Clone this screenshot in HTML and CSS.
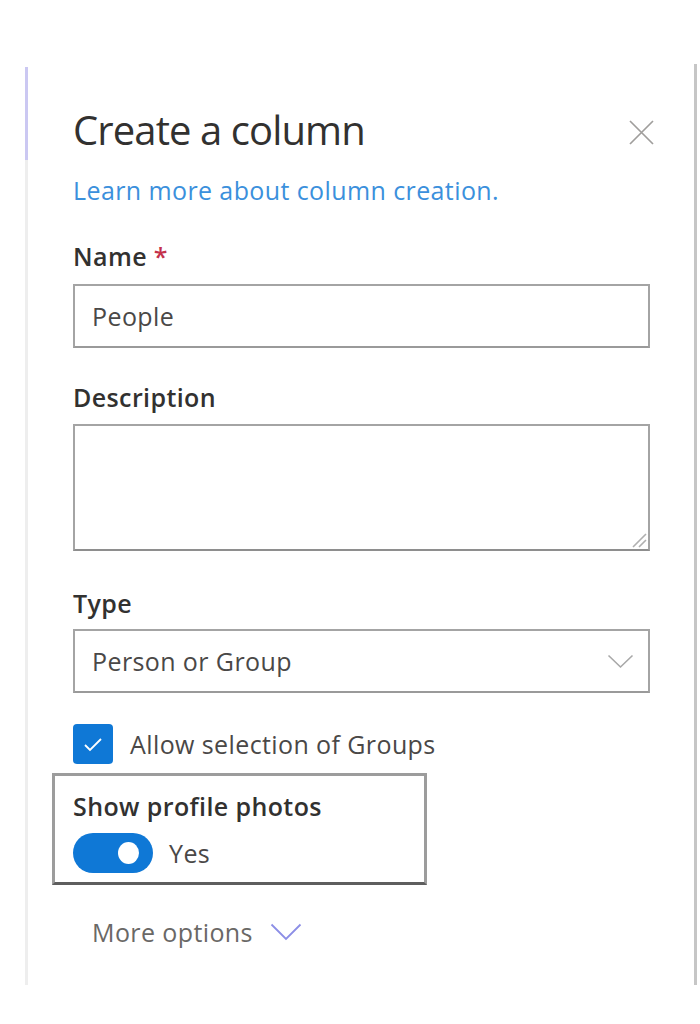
FILE: index.html
```html
<!DOCTYPE html>
<html lang="en">
<head>
<meta charset="utf-8">
<title>Create a column</title>
<link rel="stylesheet" href="styles.css">
</head>
<body>
<div class="page">
  <div class="panel">
    <div class="accent"></div>
    <div class="content">
      <div class="header">
        <h1 class="title">Create a column</h1>
        <span class="close" aria-label="Close">
          <svg width="27" height="27" viewBox="0 0 27 27"><path d="M2 2L25 25M25 2L2 25" stroke="#a09e9c" stroke-width="1.7" fill="none"/></svg>
        </span>
      </div>
      <a class="link" href="#">Learn more about column creation.</a>

      <div class="label label-name">Name <span class="req">*</span></div>
      <div class="field">People</div>

      <div class="label label-gap">Description</div>
      <div class="area-wrap">
        <textarea class="area"></textarea>
        <svg class="grip" width="18" height="18" viewBox="0 0 18 18"><path d="M17 4L4 17M17 10L10 17" stroke="#b0b0b0" stroke-width="1.6" fill="none"/></svg>
      </div>

      <div class="label label-type">Type</div>
      <div class="field select">
        <span>Person or Group</span>
        <svg width="27" height="15" viewBox="0 0 27 15"><path d="M1.5 1.5L13.5 13L25.5 1.5" stroke="#a8a8a8" stroke-width="1.6" fill="none"/></svg>
      </div>

      <div class="check-row">
        <span class="checkbox">
          <svg width="20" height="15" viewBox="0 0 20 15"><path d="M2 8L7 13L18 2" stroke="#ffffff" stroke-width="1.8" fill="none"/></svg>
        </span>
        <span class="check-label">Allow selection of Groups</span>
      </div>

      <div class="photo-box">
        <div class="label">Show profile photos</div>
        <div class="toggle-row">
          <span class="toggle"><span class="thumb"></span></span>
          <span class="toggle-label">Yes</span>
        </div>
      </div>

      <div class="more">
        <span>More options</span>
        <svg width="32" height="18" viewBox="0 0 32 18"><path d="M1.5 1.5L16 16L30.5 1.5" stroke="#8c8ee6" stroke-width="1.8" fill="none"/></svg>
      </div>
    </div>
  </div>
</div>
</body>
</html>
```

FILE: styles.css
```css
html, body {
  margin: 0;
  padding: 0;
  background: #ffffff;
}

body {
  font-family: "Open Sans", "Noto Sans", "DejaVu Sans", sans-serif;
  color: #323130;
}

.page {
  padding-top: 64px;
  padding-left: 25px;
}

.panel {
  display: flex;
  width: 672px;
  height: 921px;
}

.accent {
  width: 3px;
  flex: none;
  margin-top: 3px;
  background: linear-gradient(to bottom, #cbc8f2 0, #cbc8f2 93px, #eeeeee 93px, #eeeeee 100%);
}

.content {
  flex: 1;
  display: flex;
  flex-direction: column;
  padding: 40px 44px 0 45px;
  border-right: 3px solid #c6c6c6;
}

.header {
  display: flex;
  justify-content: space-between;
  align-items: center;
  height: 52px;
}

.title {
  margin: 0;
  font-size: 40px;
  line-height: 52px;
  font-weight: 400;
  letter-spacing: -0.9px;
  color: #323130;
}

.close {
  display: flex;
  margin-right: -5px;
  margin-top: 4px;
}

.link {
  margin-top: 18px;
  font-size: 25px;
  line-height: 32px;
  letter-spacing: 0.4px;
  color: #3b90dc;
  text-decoration: none;
}

.label {
  font-size: 25px;
  line-height: 32px;
  letter-spacing: 0.4px;
  font-weight: 600;
  color: #323130;
}

.label-name {
  margin-top: 34px;
  margin-bottom: 12px;
}

.req {
  color: #c4314b;
}

.label-gap {
  margin-top: 33px;
  margin-bottom: 11px;
}

.label-type {
  margin-top: 36px;
  margin-bottom: 10px;
}

.field {
  box-sizing: border-box;
  height: 64px;
  border: 2px solid #a4a4a4;
  border-bottom-color: #9a9a9a;
  padding: 0 17px;
  display: flex;
  align-items: center;
  font-size: 25px;
  letter-spacing: 0.4px;
  color: #4a4847;
}

.select {
  justify-content: space-between;
  padding-right: 14px;
}

.area-wrap {
  position: relative;
  display: flex;
}

.area {
  box-sizing: border-box;
  width: 100%;
  height: 127px;
  margin: 0;
  border: 2px solid #a4a4a4;
  border-bottom-color: #8e8e8e;
  resize: none;
  font-family: inherit;
}

.grip {
  position: absolute;
  right: 3px;
  bottom: 3px;
}

.check-row {
  display: flex;
  align-items: center;
  margin-top: 31px;
  gap: 17px;
}

.checkbox {
  box-sizing: border-box;
  width: 40px;
  height: 40px;
  border-radius: 4px;
  background: #0f78d6;
  display: flex;
  align-items: center;
  justify-content: center;
}

.check-label {
  font-size: 25px;
  letter-spacing: 0.4px;
  color: #4a4847;
}

.photo-box {
  box-sizing: border-box;
  width: 375px;
  margin-left: -21px;
  margin-top: 9px;
  border: 3px solid #9c9c9c;
  border-bottom-color: #5e5e5e;
  padding: 14px 18px 9px 18px;
}

.toggle-row {
  display: flex;
  align-items: center;
  gap: 16px;
  margin-top: 11px;
}

.toggle {
  box-sizing: border-box;
  width: 80px;
  height: 40px;
  border-radius: 20px;
  background: #0f78d6;
  display: flex;
  align-items: center;
  justify-content: flex-end;
  padding-right: 14px;
}

.thumb {
  width: 21px;
  height: 22px;
  border-radius: 50%;
  background: #ffffff;
}

.toggle-label {
  font-size: 25px;
  letter-spacing: 0.4px;
  color: #4a4847;
}

.more {
  display: flex;
  align-items: center;
  gap: 17px;
  margin-top: 30px;
  padding-left: 19px;
  font-size: 25px;
  letter-spacing: 0.4px;
  color: #6a6866;
}
```
